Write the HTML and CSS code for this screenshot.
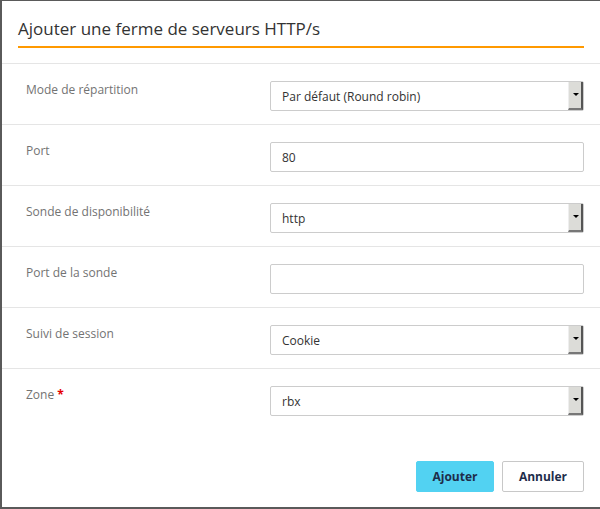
FILE: index.html
```html
<!DOCTYPE html>
<html lang="fr">
<head>
<meta charset="utf-8">
<title>Ajouter une ferme de serveurs HTTP/s</title>
<link rel="stylesheet" href="styles.css">
</head>
<body>
<div class="modal">
  <div class="modal-header">
    <h4 class="modal-title">Ajouter une ferme de serveurs HTTP/s</h4>
  </div>
  <form class="modal-body">
    <div class="form-row">
      <label class="form-label">Mode de répartition</label>
      <div class="select-wrap">
        <select class="form-control"><option>Par défaut (Round robin)</option></select>
        <span class="select-arrow"></span>
      </div>
    </div>
    <div class="form-row">
      <label class="form-label">Port</label>
      <input class="form-control" type="text" value="80">
    </div>
    <div class="form-row">
      <label class="form-label">Sonde de disponibilité</label>
      <div class="select-wrap">
        <select class="form-control"><option>http</option></select>
        <span class="select-arrow"></span>
      </div>
    </div>
    <div class="form-row">
      <label class="form-label">Port de la sonde</label>
      <input class="form-control" type="text" value="">
    </div>
    <div class="form-row">
      <label class="form-label">Suivi de session</label>
      <div class="select-wrap">
        <select class="form-control"><option>Cookie</option></select>
        <span class="select-arrow"></span>
      </div>
    </div>
    <div class="form-row last">
      <label class="form-label">Zone <span class="required">*</span></label>
      <div class="select-wrap">
        <select class="form-control"><option>rbx</option></select>
        <span class="select-arrow"></span>
      </div>
    </div>
  </form>
  <div class="modal-footer">
    <button class="btn btn-primary" type="button">Ajouter</button>
    <button class="btn btn-default" type="button">Annuler</button>
  </div>
</div>
</body>
</html>
```
FILE: styles.css
```css
html, body {
  margin: 0;
  padding: 0;
  background: #ffffff;
}

body {
  font-family: "Open Sans", "Noto Sans", sans-serif;
  color: #333333;
}

.modal {
  box-sizing: border-box;
  width: 600px;
  height: 509px;
  border-left: 2px solid #5a5a5a;
  border-top: 1px solid #5a5a5a;
  border-bottom: 2px solid #5a5a5a;
  background: #ffffff;
  display: flex;
  flex-direction: column;
}

.modal-header {
  padding: 16px 16px 15px 16px;
  border-bottom: 1px solid #e5e5e5;
}

.modal-title {
  margin: 0;
  font-size: 17px;
  font-weight: 400;
  line-height: 24px;
  color: #333333;
  padding-bottom: 5px;
  border-bottom: 2px solid #ff9900;
}

.modal-body {
  margin: 0;
  display: flex;
  flex-direction: column;
}

.form-row {
  display: flex;
  align-items: flex-start;
  height: 60px;
  box-sizing: content-box;
  padding: 0 16px 0 24px;
  border-bottom: 1px solid #e5e5e5;
}

.form-row.last {
  border-bottom: none;
}

.form-label {
  width: 244px;
  flex: none;
  margin-top: 16px;
  font-size: 12px;
  line-height: 20px;
  color: #737373;
}

.required {
  color: #e60000;
  font-weight: 700;
}

.select-wrap {
  position: relative;
  flex: 1;
  margin-top: 17px;
}

.form-control {
  box-sizing: border-box;
  display: block;
  width: 100%;
  height: 30px;
  margin: 0;
  padding: 0 11px;
  font-family: "Open Sans", "Noto Sans", sans-serif;
  font-size: 12px;
  color: #333333;
  background: #ffffff;
  border: 1px solid #cccccc;
  border-radius: 2px;
  outline: none;
  -webkit-appearance: none;
  appearance: none;
}

.form-row > input.form-control {
  flex: 1;
  width: auto;
  margin-top: 17px;
}

.select-arrow {
  position: absolute;
  top: 1px;
  right: 1px;
  bottom: 1px;
  width: 15px;
  box-sizing: border-box;
  background: #dcdcd8;
  border-right: 2px solid #555555;
  border-bottom: 2px solid #777777;
  border-left: 1px solid #eeeeee;
}

.select-arrow::after {
  content: "";
  position: absolute;
  left: 4px;
  top: 11px;
  border-left: 3px solid transparent;
  border-right: 3px solid transparent;
  border-top: 3px solid #000000;
}

.modal-footer {
  margin-top: auto;
  display: flex;
  justify-content: flex-end;
  gap: 8px;
  padding: 0 16px 15px 16px;
}

.btn {
  box-sizing: border-box;
  height: 31px;
  padding: 0 12px;
  font-family: "Open Sans", "Noto Sans", sans-serif;
  font-size: 12px;
  font-weight: 700;
  color: #1e2d4a;
  border-radius: 2px;
  cursor: pointer;
}

.btn-primary {
  width: 78px;
  background: #52d2f2;
  border: 1px solid #52d2f2;
}

.btn-default {
  width: 82px;
  background: #ffffff;
  border: 1px solid #c8c8c8;
}
```
